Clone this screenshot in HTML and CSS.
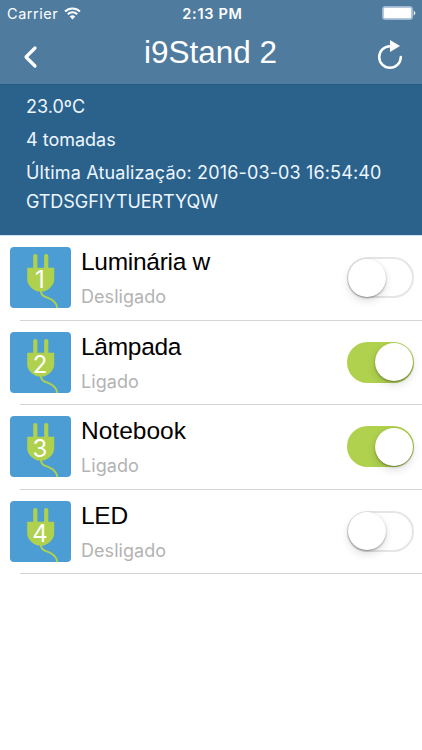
FILE: index.html
```html
<!DOCTYPE html>
<html lang="pt-BR">
<head>
<meta charset="utf-8">
<title>i9Stand 2</title>
<link rel="stylesheet" href="styles.css">
</head>
<body>
<svg class="defs" width="0" height="0" aria-hidden="true">
  <symbol id="plug" viewBox="0 0 61 61">
    <path d="M25.3 9v14M36.2 9v14" fill="none" stroke="#afd14d" stroke-width="4.2" stroke-linecap="round"/>
    <path d="M17.2 20.7h27v11.5c0 6-5.3 10.5-10.5 12.2h-6C22.5 42.7 17.2 38.200 17.200 32.200z" fill="#afd14d"/>
    <path d="M31 43c-.5 5 2.500 6.300 7 7.900 5.500 2 8.800 5 9.300 10.100" fill="none" stroke="#afd14d" stroke-width="2"/>
  </symbol>
</svg>
<header class="header">
  <div class="status">
    <div class="carrier"><span>Carrier</span>
      <svg width="17" height="13" viewBox="0 0 17 13" fill="none" stroke="#fff" stroke-width="2"><path d="M1 4.500a10.600 10.600 0 0 1 15 0M3.800 7.300a6.600 6.600 0 0 1 9.400 0"/><path d="M8.500 12.500L5.700 9.600a4 4 0 0 1 5.600 0z" fill="#fff" stroke="none"/></svg>
    </div>
    <time class="clock">2:13 PM</time>
    <svg class="battery" width="34" height="15" viewBox="0 0 34 15"><rect x=".5" y=".5" width="30" height="13" rx="2.500" fill="#b4c9dd" stroke="#9db8cf"/><rect x="2" y="2" width="27" height="10" rx="1" fill="#fff"/><path d="M31.700 4.500q1.700 1 1.700 2.500t-1.700 2.500z" fill="#e8f0f7"/></svg>
  </div>
  <nav class="nav">
    <svg width="16" height="24" viewBox="0 0 16 24"><path d="M13 3L4 12l9 9" fill="none" stroke="#fff" stroke-width="3.200" stroke-linecap="round" stroke-linejoin="round"/></svg>
    <h1>i9Stand 2</h1>
    <svg width="28" height="31" viewBox="0 0 28 31"><path d="M14 6.200a10.800 10.800 0 1 0 10.800 10.800" fill="none" stroke="#fff" stroke-width="2.500" stroke-linecap="round"/><path d="M14 0l10 6-10 6z" fill="#fff"/></svg>
  </nav>
</header>
<section class="info">
  <p class="temp">23.0ºC</p>
  <p class="count">4 tomadas</p>
  <p class="updated">Última Atualização: 2016-03-03 16:54:40</p>
  <p class="code">GTDSGFIYTUERTYQW</p>
</section>
<main>
  <article class="row">
    <div class="tile"><svg class="plug"><use href="#plug"/></svg><span class="num">1</span></div>
    <div class="body"><div class="label"><h2>Luminária w</h2><p>Desligado</p></div><span class="switch"></span></div>
  </article>
  <article class="row">
    <div class="tile"><svg class="plug"><use href="#plug"/></svg><span class="num">2</span></div>
    <div class="body"><div class="label"><h2>Lâmpada</h2><p>Ligado</p></div><span class="switch on"></span></div>
  </article>
  <article class="row">
    <div class="tile"><svg class="plug"><use href="#plug"/></svg><span class="num">3</span></div>
    <div class="body"><div class="label"><h2 class="wide">Notebook</h2><p>Ligado</p></div><span class="switch on"></span></div>
  </article>
  <article class="row">
    <div class="tile"><svg class="plug"><use href="#plug"/></svg><span class="num">4</span></div>
    <div class="body"><div class="label"><h2>LED</h2><p>Desligado</p></div><span class="switch"></span></div>
  </article>
</main>
</body>
</html>
```
FILE: styles.css
```css
* { box-sizing: border-box; }
body { margin: 0; background: #fff; font-family: Inter, "Liberation Sans", sans-serif; }
h1, h2, p { margin: 0; font-weight: 400; white-space: nowrap; }
svg { display: block; }
.defs { position: absolute; }
.header { height: 84px; background: #4f7b9f; color: #fff; }
.status { height: 26px; padding: 0 7px; display: grid; grid-template-columns: 1fr auto 1fr; align-items: center; }
.carrier { display: flex; align-items: center; gap: 6px; font-size: 14.500px; letter-spacing: .55px; }
.clock { font-size: 14.500px; font-weight: 600; letter-spacing: .7px; padding-left: 3px; }
.battery { justify-self: end; margin-right: -1px; }
.nav { height: 58px; padding: 0 18px 0 22px; display: grid; grid-template-columns: 28px 1fr 28px; align-items: start; }
.nav svg:first-child { margin-top: 19px; }
.nav svg:last-child { margin-top: 14px; }
h1 { font: 31.500px/36px "Liberation Sans", sans-serif; text-align: center; padding: 8px 5px 0 0; }
.info { height: 152px; padding: 11px 26px 0; background: #2b628c; border-top: 1px solid #285b84; border-bottom: 1px solid #cce3f5; color: #eef6ff; font-size: 18px; line-height: 22px; }
.count { margin-top: 11px; }
.updated { margin-top: 11px; letter-spacing: .14px; }
.code { margin-top: 7px; letter-spacing: -.07px; }
.row { height: 84.500px; padding-left: 9.500px; display: flex; align-items: flex-start; }
.tile { width: 61px; height: 61px; margin-top: 11px; border-radius: 4px; background: #4b9dd3; overflow: hidden; display: grid; flex: none; }
.plug, .num { grid-area: 1 / 1; }
.plug { width: 61px; height: 61px; }
.num { font: 24px/26px Inter, sans-serif; color: #fff; text-align: center; padding-top: 20px; }
.body { flex: 1; height: 100%; margin-left: -50.500px; padding: 0 8px 0 61px; display: flex; justify-content: space-between; border-bottom: 1px solid #d4d4d8; }
.label { padding-top: 12px; }
h2 { font: 24.500px/28px "Liberation Sans", sans-serif; letter-spacing: -.28px; color: #000; }
.wide { letter-spacing: 0; }
.label p { margin-top: 10px; font-size: 18px; line-height: 22px; color: #b3b3b3; letter-spacing: .06px; }
.switch { width: 67px; height: 41px; margin-top: 21px; border-radius: 21px; border: 2px solid #e5e5e5; display: flex; }
.switch::before { content: ""; width: 38px; height: 38px; margin: -.5px 0 0 -1px; border-radius: 50%; background: #fff; box-shadow: 0 1px 2px rgba(0,0,0,.35), 0 4px 9px rgba(0,0,0,.13); }
.switch.on { background: #afd14d; border-color: #afd14d; justify-content: flex-end; }
.switch.on::before { margin: -.5px -.5px 0 0; }
```
